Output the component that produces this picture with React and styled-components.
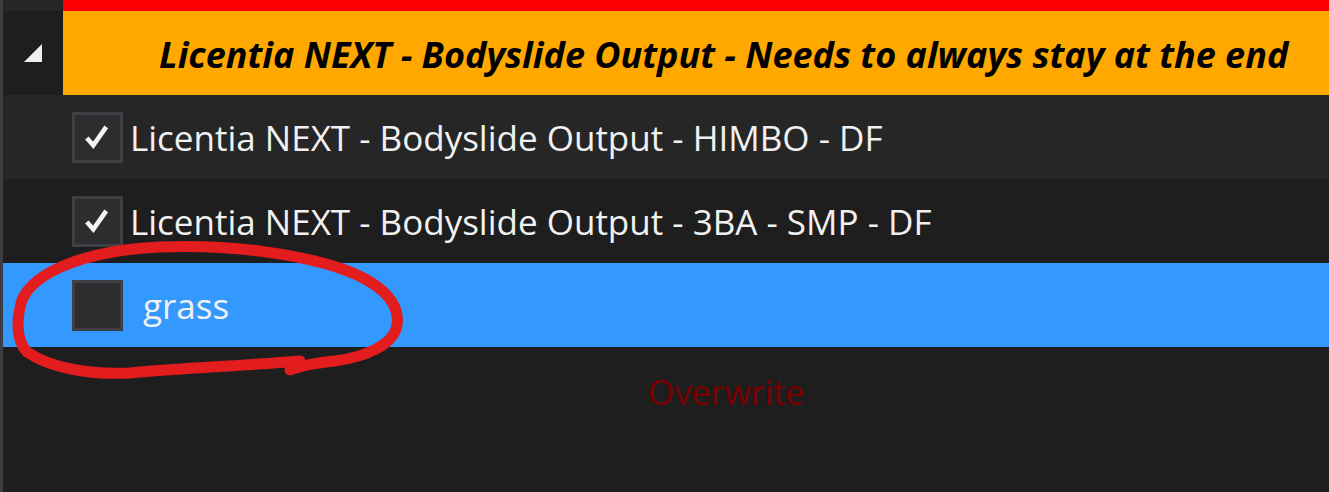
import React from "react"
import styled, { createGlobalStyle } from 'styled-components'

const GlobalStyle = createGlobalStyle`
  html, body {
    margin: 0;
    padding: 0;
    background: #1e1e1e;
    overflow: hidden;
  }
`

const mods = [
  { name: "Licentia NEXT - Bodyslide Output - HIMBO - DF", checked: true },
  { name: "Licentia NEXT - Bodyslide Output - 3BA - SMP - DF", checked: true },
  { name: "grass", checked: false, selected: true },
]

function App() {
  return (
    <>
      <GlobalStyle />
      <Window>
        <Edge />
        <ModList>
          <SeparatorRow>
            <ExpanderCell>
              <Expander viewBox="0 0 18 18">
                <polygon points="18,0 18,18 0,18" fill="#f0f0f0" />
              </Expander>
            </ExpanderCell>
            <SeparatorTitle>Licentia NEXT - Bodyslide Output - Needs to always stay at the end</SeparatorTitle>
          </SeparatorRow>
          {mods.map((mod, i) => (
            <ModRow key={mod.name} $alt={i % 2 === 0} $selected={mod.selected}>
              <CheckBox>
                {mod.checked && (
                  <CheckMark viewBox="0 0 26 26">
                    <path d="M2 14 L9 22 L23 2" stroke="#f4f4f4" strokeWidth="5" fill="none" />
                  </CheckMark>
                )}
              </CheckBox>
              <ModName $spaced={!mod.checked}>{mod.name}</ModName>
            </ModRow>
          ))}
          <Overwrite>Overwrite</Overwrite>
        </ModList>
        <Scribble viewBox="0 0 1329 492" preserveAspectRatio="none">
          <path
            d="M300 361 C 240 366, 180 368, 130 373 C 90 375, 50 368, 27 352 C 16 340, 16 320, 22 300 C 35 270, 90 250, 160 247 C 230 244, 300 254, 345 270 C 385 285, 400 305, 397 325 C 394 345, 365 357, 335 361 C 315 363, 300 366, 290 370"
            stroke="#e31c1e"
            strokeWidth="11"
            fill="none"
            strokeLinecap="round"
          />
        </Scribble>
      </Window>
    </>
  )
}

const Window = styled.div`
  position: relative;
  display: flex;
  width: 1329px;
  height: 492px;
  font-family: "Open Sans", "Noto Sans", sans-serif;
`

const Edge = styled.div`
  width: 3px;
  flex-shrink: 0;
  background: #3d3d45;
`

const ModList = styled.div`
  flex: 1;
  display: flex;
  flex-direction: column;
  background: #1e1e1e;
`

const SeparatorRow = styled.div`
  display: grid;
  grid-template-columns: 60px 1fr;
  height: 95px;
`

const ExpanderCell = styled.div`
  display: flex;
  align-items: center;
  padding-left: 21px;
  background: #1e1e1e;
  border-top: 11px solid #262626;
`

const Expander = styled.svg`
  width: 18px;
  height: 18px;
`

const SeparatorTitle = styled.div`
  display: flex;
  align-items: center;
  padding-left: 96px;
  padding-top: 2px;
  background: #ffa800;
  border-top: 11px solid #ff0000;
  color: #000;
  font-size: 36px;
  font-weight: 700;
  font-style: italic;
  white-space: nowrap;
  overflow: hidden;
`

const ModRow = styled.div`
  display: flex;
  align-items: center;
  height: 84px;
  padding-left: 69px;
  background: ${p => p.$selected ? '#3399ff' : p.$alt ? '#262626' : '#1e1e1e'};
`

const CheckBox = styled.div`
  box-sizing: border-box;
  width: 51px;
  height: 51px;
  display: flex;
  align-items: center;
  justify-content: center;
  background: #2d2d30;
  border: 3px solid #3f3f46;
  flex-shrink: 0;
`

const CheckMark = styled.svg`
  width: 24px;
  height: 24px;
  margin-right: 2px;
`

const ModName = styled.span`
  margin-left: ${p => p.$spaced ? '20px' : '7px'};
  color: #f1f1f1;
  font-size: 35px;
  white-space: nowrap;
`

const Overwrite = styled.div`
  padding-top: 22px;
  padding-left: 645px;
  color: #7a0000;
  font-size: 34px;
`

const Scribble = styled.svg`
  position: absolute;
  inset: 0;
  width: 100%;
  height: 100%;
  pointer-events: none;
`

export default App
